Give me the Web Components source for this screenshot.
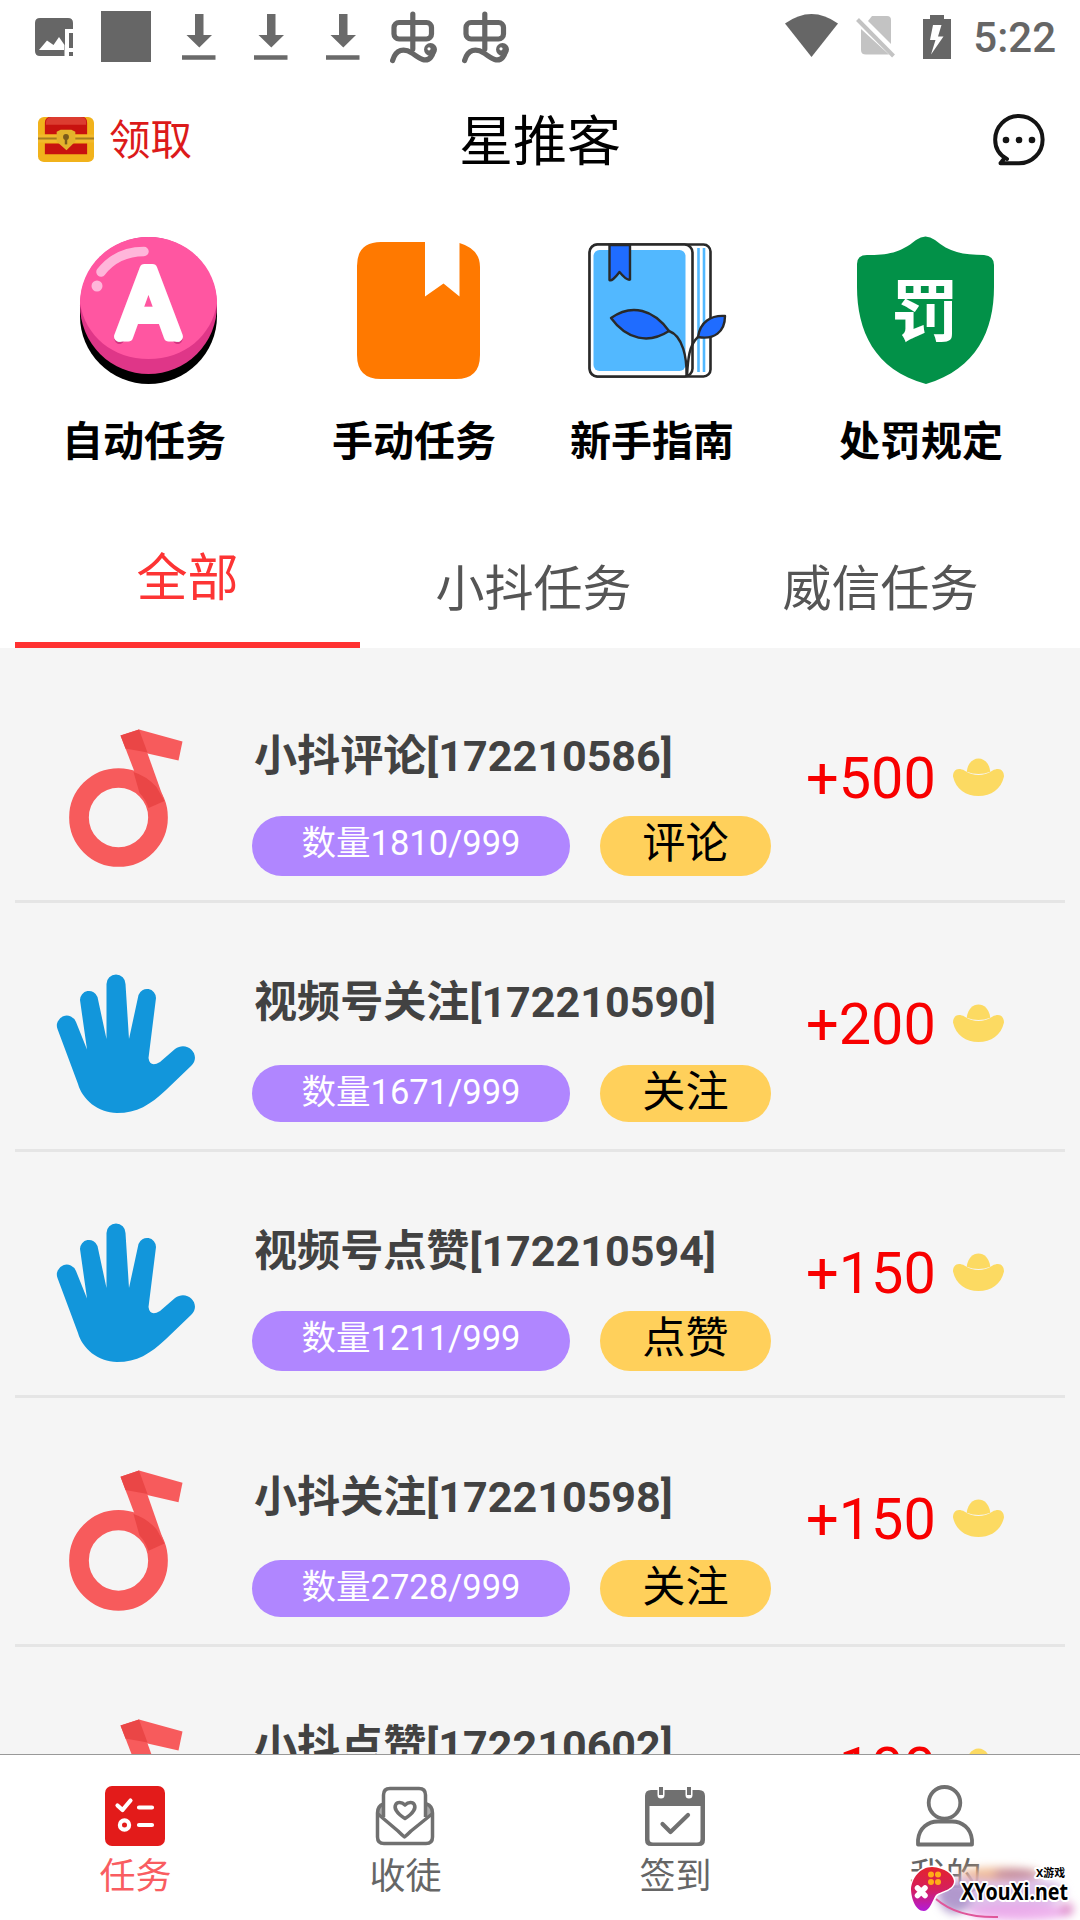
<!DOCTYPE html>
<html lang="zh-CN">
<head>
<meta charset="utf-8">
<title>星推客</title>
<style>
html,body{margin:0;padding:0;background:#fff}
body{width:1080px;height:1920px;overflow:hidden;font-family:Roboto,"Noto Sans CJK SC",sans-serif}
</style>
</head>
<body>
<task-app></task-app>
<script>
const define = (name, html, setup) => {
  const tpl = document.createElement('template');
  tpl.innerHTML = html;
  customElements.define(name, class extends HTMLElement {
    constructor() {
      super();
      this.attachShadow({mode: 'open'}).appendChild(tpl.content.cloneNode(true));
    }
    connectedCallback() { if (setup) setup(this, this.shadowRoot); }
  });
};

const icons = {
  picture: ['0 0 38 38', '<path fill="#666" fill-rule="evenodd" d="M5 0H33Q38 0 38 5V11H30V32H29.5V38H5Q0 38 0 33V5Q0 0 5 0ZM4 32H29.5V27L24 19L18.5 27L12 22.5Z"/><path fill="#666" d="M34 15h4v15h-4zM34 34h4v4h-4z"/>'],
  square: ['0 0 50 51', '<path fill="#666" d="M0 0h50v51H0z"/>'],
  download: ['0 0 34 46', '<path fill="#6a6a6a" d="M13 0h8.500v21h8.500L17.300 33.500L4.500 21H13zM0 41.200h33.500v4.600H0z"/>'],
  bug: ['0 0 48 52', '<g fill="none" stroke="#666" stroke-width="5.200" stroke-linecap="round"><rect x="4" y="11.500" width="37.500" height="16.500" rx="5"/><path d="M22.800 3V38"/><path d="M2.600 49.500C6 38 14 37 22 42C30 48 36 52 41 46Q44 42 43.500 37"/></g><circle cx="40.500" cy="38.500" r="6.500" fill="#666"/><circle cx="39" cy="37.800" r="1.600" fill="#fff"/>'],
  wifi: ['0 0 53 43', '<path fill="#666" d="M0 9.500Q26.500-9.500 53 9.500L26.500 43Z"/>'],
  sim: ['0 0 40 42', '<path fill="#c3c3c3" d="M16 0H31Q35 0 35 4V28L12 5ZM5 13L33 38.500H10Q5 38.500 5 34Z"/><path d="M1.500 3.500L37.500 40" stroke="#c3c3c3" stroke-width="4"/>'],
  battery: ['0 0 28 44', '<path fill="#666" fill-rule="evenodd" d="M7 0H21V4H28V44H0V4H7ZM10 10L7 25H12.500L8 39.500L20.500 21.500H15L18.500 10Z"/>'],
  chest: ['0 0 57 46', '<rect width="57" height="46" rx="6" fill="#f1b21b"/><path d="M7 18V6Q7 0 13 0H45Q50 0 50 6V18Z" fill="#c8120f"/><path d="M8 8V5Q9 0 14 0H43Q49 0 49 5V8Z" fill="#dc3c30"/><path d="M7 27H50V38H7Z" fill="#c8120f"/><path d="M0 18H57V26H0Z" fill="#f2b92b"/><path d="M0 22H57" stroke="#a47d20" stroke-width="2"/><path d="M19 15L23 13H34L38 15V25L29 34L19 25Z" fill="#e3b32c"/><circle cx="28.500" cy="20.500" r="3" fill="#7b5b1b"/><path d="M28.500 21V28" stroke="#7b5b1b" stroke-width="2.500"/>'],
  chat: ['0 0 52 52', '<path d="M14 45C6.500 41 2.200 34 2.200 26A23.700 23.700 0 1 1 26 49.300H7.500L12 43.500" fill="none" stroke="#141414" stroke-width="4" stroke-linejoin="round" stroke-linecap="round"/><circle cx="13" cy="26" r="3.300" fill="#141414"/><circle cx="26" cy="26" r="3.300" fill="#141414"/><circle cx="39" cy="26" r="3.300" fill="#141414"/>'],
  button: ['80 237 138 147', '<path d="M80 305.500V316A68.500 68 0 0 0 217 316V305.500Z" fill="#000"/><circle cx="148.500" cy="305.500" r="68.500" fill="#df3688"/><path fill="#ff56a1" d="M80 303A68.500 66 0 0 1 217 303C212 336 184 359 148.500 359C113 359 85 336 80 303Z"/><path d="M101 272Q117 251.500 144 251.500" stroke="#ffb6da" stroke-width="9.500" stroke-linecap="round" fill="none"/><circle cx="97" cy="286" r="5.500" fill="#ffb6da"/><g font-family="Roboto" font-size="94" text-anchor="middle" stroke-width="10" stroke-linejoin="round"><path d="M119.500 339l10.500-20h37l10.500 20" fill="none" stroke="#d43582" stroke-width="10" stroke-linecap="round"/><path d="M119.500 337l10.500-20h37l10.500 20" fill="none" stroke="#ddd" stroke-width="10" stroke-linecap="round"/><text x="148.500" y="337" fill="#fff" stroke="#fff">A</text></g>'],
  bookmark: ['350 237 138 147', '<path fill="#ff7900" d="M381 242H425V296.500L443.500 283.500L459.500 296.500V243Q480 249 480 267V355Q480 379 456 379H381Q357 379 357 355V266Q357 242 381 242Z"/>'],
  book: ['588 237 138 147', '<g stroke="#292929" stroke-width="2.600" fill="#fff" stroke-linejoin="round"><rect x="590" y="244.500" width="120.500" height="132" rx="7"/><rect x="589.500" y="244.500" width="103" height="132" rx="8"/></g><rect x="593.500" y="250" width="92" height="121" rx="6" fill="#52b8ff"/><path d="M698.500 248V372M704 248V372" stroke="#52b8ff" stroke-width="2.600"/><g stroke="#292929" stroke-width="2.400" fill="#1f6cff" stroke-linejoin="round"><path d="M609.500 245H630V279.500Q627 281 619.500 272Q612 282 609.500 280Z"/><path d="M611 318C632 303 654 310 669 331C649 344 627 340 611 318Z"/><path d="M725 316C725 332 714 340 698 337C700 322 711 315 725 316Z"/><path fill="none" d="M669 331C683 336 687 358 686.500 376M698 337C689 345 688 359 687 376"/></g>'],
  shield: ['857 237 138 147', '<path fill="#029148" d="M857 264Q857 255 867 255C888 255 900 253 916 240Q925.500 233 935 240C949 252 963 255 984 255Q994 256 994 265V287C994 330 977 369 926 384C874 370 857 330 857 287Z"/><text x="925" y="336" text-anchor="middle" font-family="Noto Sans CJK SC" font-weight="700" font-size="68" fill="#fff">罚</text>'],
  note: ['57 729 138 138', '<circle cx="118.500" cy="817.500" r="39.500" fill="none" stroke="#f75b5c" stroke-width="19.700"/><path fill="#f75b5c" d="M120.500 735.500L139 729.500L164.500 801L148.500 808Z"/><path fill="#f75b5c" d="M139 729.500L182.500 741.500L178.500 760.500L125.500 748.500Z"/><path fill="#ea4646" d="M120.500 735.500L139 729.500L147.500 752.500L125.500 748.500ZM133.500 772Q146.500 776 156.500 787L164.500 801L148.500 808Q145.500 799 139.500 793Z"/>'],
  hand: ['57 975 138 138', '<path fill="#1296db" d="M57.500 1029A9.500 9.500 0 0 1 76 1022L87 1049.500L80 1000A9 9 0 0 1 97.500 997L106.500 1039V984A9.200 9.200 0 0 1 125.500 984L129 1039L138.500 995A9 9 0 0 1 156 998L148.500 1058Q150 1068 160 1062L175 1049C188 1040 202 1056 191 1066L166 1090C150 1105 137 1113 117 1113C98 1113 82 1099 78 1084Z"/>'],
  ingot: ['0 0 52 39', '<path fill="#fcda62" d="M14 14C16-4 36-4 38 14Q26 19 14 14Z"/><path fill="#fcda62" d="M12 13Q26 22 40 13C48 9 52 13 52 19C49 32 39 39 26 39C13 39 3 32 0 19C0 13 4 9 12 13Z"/>'],
  tasks: ['0 0 60 60', '<rect width="60" height="60" rx="7" fill="#e31b1a"/><g fill="none" stroke="#fff" stroke-width="4.200" stroke-linecap="round" stroke-linejoin="round"><path d="M12.500 19.500L17.500 24L25.500 14.500M34 21.500H47M34 39H47"/><circle cx="19.500" cy="39" r="4.600"/></g>'],
  invite: ['0 0 60 60', '<g fill="none" stroke="#707070" stroke-width="3.500" stroke-linejoin="round"><path fill="#aaa" stroke="none" d="M8.500 18L2.500 25V29L8.500 33ZM51.500 18L57.500 25V29L51.500 33Z"/><path d="M8.500 31V9Q8.500 2.500 15 2.500H44Q50.500 2.500 50.500 9V31"/><path d="M8.500 18Q2.500 20 2.500 27V51Q2.500 57.500 9 57.500H51Q57.500 57.500 57.500 51V27Q57.500 20 51.500 18"/><path d="M3 28L23 45Q27 49 29.500 51Q32 49 36 45L57 28"/><path d="M30 32.500C12 21 23 12 30 19C37 12 48 21 30 32.500Z"/></g>'],
  calendar: ['0 0 60 60', '<path fill="#707070" fill-rule="evenodd" d="M6 4H54Q60 4 60 10V54Q60 60 54 60H6Q0 60 0 54V10Q0 4 6 4ZM4.500 20V53Q4.500 56.500 8 56.500H52Q55.500 56.500 55.500 53V20Z"/><path d="M16 1V9M44 1V9" stroke="#fff" stroke-width="7" stroke-linecap="round"/><path d="M16 1V9M44 1V9" stroke="#707070" stroke-width="4"/><path d="M17.500 38L25.500 46L43 29" fill="none" stroke="#707070" stroke-width="4.200" stroke-linecap="round" stroke-linejoin="round"/>'],
  person: ['0 0 60 60', '<g fill="none" stroke="#707070" stroke-width="3.800"><circle cx="29.500" cy="16.800" r="15.800"/><path d="M3 58.500V54C4 42 13 35.500 23 35.500H37C47 35.500 56 42 57 54V58.500Z" stroke-linejoin="round"/></g>']
};

define('app-icon', `<style>:host{display:block;flex:none}svg{display:block;width:100%;height:100%;overflow:visible}</style><svg preserveAspectRatio="none"></svg>`, (el, root) => {
  const [box, art] = icons[el.getAttribute('name')];
  const svg = root.querySelector('svg');
  svg.setAttribute('viewBox', box);
  svg.innerHTML = art;
  if (el.hasAttribute('size')) {
    const [w, h] = el.getAttribute('size').split(' ');
    el.style.width = w + 'px';
    el.style.height = h + 'px';
  }
});

const addIcon = (el, root) => {
  const icon = document.createElement('app-icon');
  icon.setAttribute('name', el.getAttribute('icon'));
  root.querySelector('.pic').appendChild(icon);
};

define('status-bar', `<style>
:host{display:flex;justify-content:space-between;height:76px;padding:0 24px 0 35px;box-sizing:border-box}
div{display:flex;height:74px;align-items:center}
.time{font-size:42px;font-weight:500;color:#666;line-height:50px;margin:1px 0 0 22px}
</style>
<div><app-icon name="picture" size="38 38" style="margin-top:-1px"></app-icon><app-icon name="square" size="50 51" style="margin:-1px 0 0 28px"></app-icon><app-icon name="download" size="34 46" style="margin:-1px 0 0 30.500px"></app-icon><app-icon name="download" size="34 46" style="margin:-1px 0 0 38px"></app-icon><app-icon name="download" size="34 46" style="margin:-1px 0 0 38px"></app-icon><app-icon name="bug" size="48 52" style="margin:-1px 0 0 30.500px"></app-icon><app-icon name="bug" size="48 52" style="margin:-1px 0 0 24px"></app-icon></div>
<div><app-icon name="wifi" size="53 43" style="margin-top:-3px"></app-icon><app-icon name="sim" size="40 42" style="margin-left:18px"></app-icon><app-icon name="battery" size="28 44" style="margin:-1px 0 0 27px"></app-icon><span class="time">5:22</span></div>`);

define('app-header', `<style>
:host{display:grid;grid-template-columns:1fr auto 1fr;align-items:center;height:130px;padding:0 35px 0 38px;box-sizing:border-box}
.claim{display:flex;align-items:center;gap:15px;color:#dc1a1a;font-size:41.500px;line-height:60px}
h1{margin:3px 0 0 -3px;font-size:54px;font-weight:400;line-height:76px;color:#000}
.end{justify-self:end}
</style>
<div class="claim"><app-icon name="chest" size="56 45" style="margin-top:-4px"></app-icon><span>领取</span></div>
<h1><slot></slot></h1><app-icon class="end" name="chat" size="52 52" style="margin-top:-3px"></app-icon>`);

define('quick-entry', `<style>
:host{display:block;width:138px}
.pic{display:grid;width:138px;height:147px}
.label{width:164px;margin:28px 0 0 -18px;font-size:41px;font-weight:700;line-height:60px;color:#000;white-space:nowrap}
</style><div class="pic"></div><div class="label"><slot></slot></div>`, addIcon);

define('task-tab', `<style>
:host{display:block;box-sizing:border-box;width:347px;height:122px;padding-top:26px;text-align:center;font-size:49px;line-height:76px;color:#555}
:host([active]){width:345px;font-size:51px;color:#fd3434;border-bottom:6px solid #ff3131;padding-top:15px}
</style><slot></slot>`);

define('task-item', `<style>
:host{display:flex;box-sizing:border-box;flex:none;height:246px;border-bottom:3px solid #e5e5e5;padding-left:42px}
:host(:nth-child(even)){height:249px}
.pic{display:grid;width:138px;height:138px;margin-top:72px}
:host(:nth-child(4)) .pic{height:141px}
.body{width:519px;margin:69.500px 0 0 57px}
.title{font-size:43.100px;font-weight:700;line-height:60px;height:60px;padding-left:2px;color:#424242;white-space:nowrap}
.tags{display:flex;gap:30px;margin-top:29.500px}
.tags span{height:60px;border-radius:30px;line-height:55px;text-align:center;white-space:nowrap}
:host(:nth-child(even)) .tags{margin-top:32.500px}
:host(:nth-child(even)) .tags span{height:57px}
.count{width:318px;background:#b086ff;color:#fff;font-size:34.500px}
.kind{width:171px;background:#ffd05b;color:#000;font-size:43.200px}
.price{display:flex;align-items:center;height:68px;margin:88px 0 0 35px;color:#f80000;font-size:57.600px;line-height:68px}
.price b{font-weight:400;width:146.500px}
.price app-icon{margin-top:-4px}
</style>
<div class="pic"></div>
<div class="body"><div class="title"><slot></slot></div><div class="tags"><span class="count"></span><span class="kind"></span></div></div>
<div class="price"><b></b><app-icon name="ingot" size="51 38"></app-icon></div>`, (el, root) => {
  addIcon(el, root);
  if (el.hasAttribute('count')) {
    root.querySelector('.count').textContent = '数量' + el.getAttribute('count');
    root.querySelector('.kind').textContent = el.getAttribute('kind');
  }
  root.querySelector('b').textContent = '+' + el.getAttribute('price');
});

define('task-list', `<style>:host{display:flex;flex-direction:column;flex:1;min-height:0;overflow:hidden;background:#f5f5f5;padding:9px 15px 0}</style><slot></slot>`);

define('nav-item', `<style>
:host{display:flex;flex-direction:column;align-items:center;flex:1;color:#666;font-size:36px;line-height:44px;padding-top:31px}
:host([active]){color:#f95d61}
.pic{display:grid;width:60px;height:60px}
span{margin:9px 0 0 1px}
</style><div class="pic"></div><span><slot></slot></span>`, addIcon);

define('bottom-nav', `<style>:host{display:flex;flex:none;height:166px;box-sizing:border-box;border-top:1px solid #999;background:#fff}</style><slot></slot>`);

define('site-mark', `<style>:host{position:absolute;right:0;bottom:0;width:180px;height:70px}svg{display:block}</style>
<svg width="180" height="70" viewBox="900 1850 180 70">
<defs><filter id="soft" x="-30%" y="-60%" width="160%" height="220%"><feGaussianBlur stdDeviation="4.500"/></filter>
<linearGradient id="pad" x1="0" y1="0" x2="0" y2="1"><stop offset="0" stop-color="#e4242c"/><stop offset=".5" stop-color="#d51f5c"/><stop offset="1" stop-color="#b31bd8"/></linearGradient></defs>
<g filter="url(#soft)"><ellipse cx="1000" cy="1893" rx="66" ry="18" fill="#d6b6e6" opacity=".85"/><ellipse cx="1000" cy="1874" rx="42" ry="7" fill="#eeb186" opacity=".8"/><ellipse cx="1015" cy="1874" rx="22" ry="5" fill="#a76aa5" opacity=".6"/><ellipse cx="955" cy="1898" rx="16" ry="16" fill="#a38bc4" opacity=".75"/><ellipse cx="1020" cy="1912" rx="52" ry="9" fill="#eba4ea" opacity=".85"/><circle cx="1067" cy="1909" r="7" fill="#d87fc0" opacity=".7"/></g>
<path d="M936 1899Q958 1918 998 1917" fill="none" stroke="#e0569a" stroke-width="2"/>
<path d="M911 1889C912 1878 920 1867 932 1867C945 1868 953 1874 954 1881C954 1890 941 1891 936 1895C933 1899 930 1911 924 1911C915 1911 911 1897 911 1889Z" fill="url(#pad)" stroke="#fff" stroke-width="3" paint-order="stroke"/>
<g fill="#ffad18"><circle cx="931" cy="1874.500" r="3"/><circle cx="938" cy="1874.500" r="3"/><circle cx="931" cy="1882" r="3"/><circle cx="938" cy="1882" r="3"/></g>
<path d="M917.500 1888L925 1895.500M925 1888L917.500 1895.500" stroke="#fff" stroke-width="5.500" stroke-linecap="round"/>
<g fill="#000" stroke="#fff" stroke-width="4" stroke-linejoin="round" paint-order="stroke" font-weight="700">
<text x="961" y="1900" font-family="Noto Sans" font-size="24" textLength="107" lengthAdjust="spacingAndGlyphs">XYouXi.net</text>
<text x="1036" y="1876.500" font-family="Noto Sans,Noto Sans CJK SC" font-size="11" textLength="29" lengthAdjust="spacingAndGlyphs">X游戏</text></g>
</svg>`);

define('task-app', `<style>
:host{display:flex;flex-direction:column;position:relative;width:1080px;height:1920px;background:#fff;overflow:hidden}
.entries{display:flex;box-sizing:border-box;flex:none;height:320px;padding:31px 0 0 80px}
.tabs{display:flex;flex:none;height:122px;padding:0 15px}
</style>
<status-bar></status-bar>
<app-header>星推客</app-header>
<div class="entries"><quick-entry icon="button">自动任务</quick-entry><quick-entry icon="bookmark" style="margin-left:132px">手动任务</quick-entry><quick-entry icon="book" style="margin-left:100px">新手指南</quick-entry><quick-entry icon="shield" style="margin-left:131px">处罚规定</quick-entry></div>
<div class="tabs"><task-tab active>全部</task-tab><task-tab>小抖任务</task-tab><task-tab>威信任务</task-tab></div>
<task-list>
<task-item icon="note" count="1810/999" kind="评论" price="500">小抖评论[172210586]</task-item>
<task-item icon="hand" count="1671/999" kind="关注" price="200">视频号关注[172210590]</task-item>
<task-item icon="hand" count="1211/999" kind="点赞" price="150">视频号点赞[172210594]</task-item>
<task-item icon="note" count="2728/999" kind="关注" price="150">小抖关注[172210598]</task-item>
<task-item icon="note" price="100">小抖点赞[172210602]</task-item>
</task-list>
<bottom-nav><nav-item icon="tasks" active>任务</nav-item><nav-item icon="invite">收徒</nav-item><nav-item icon="calendar">签到</nav-item><nav-item icon="person">我的</nav-item></bottom-nav>
<site-mark></site-mark>`);
</script>
</body>
</html>
